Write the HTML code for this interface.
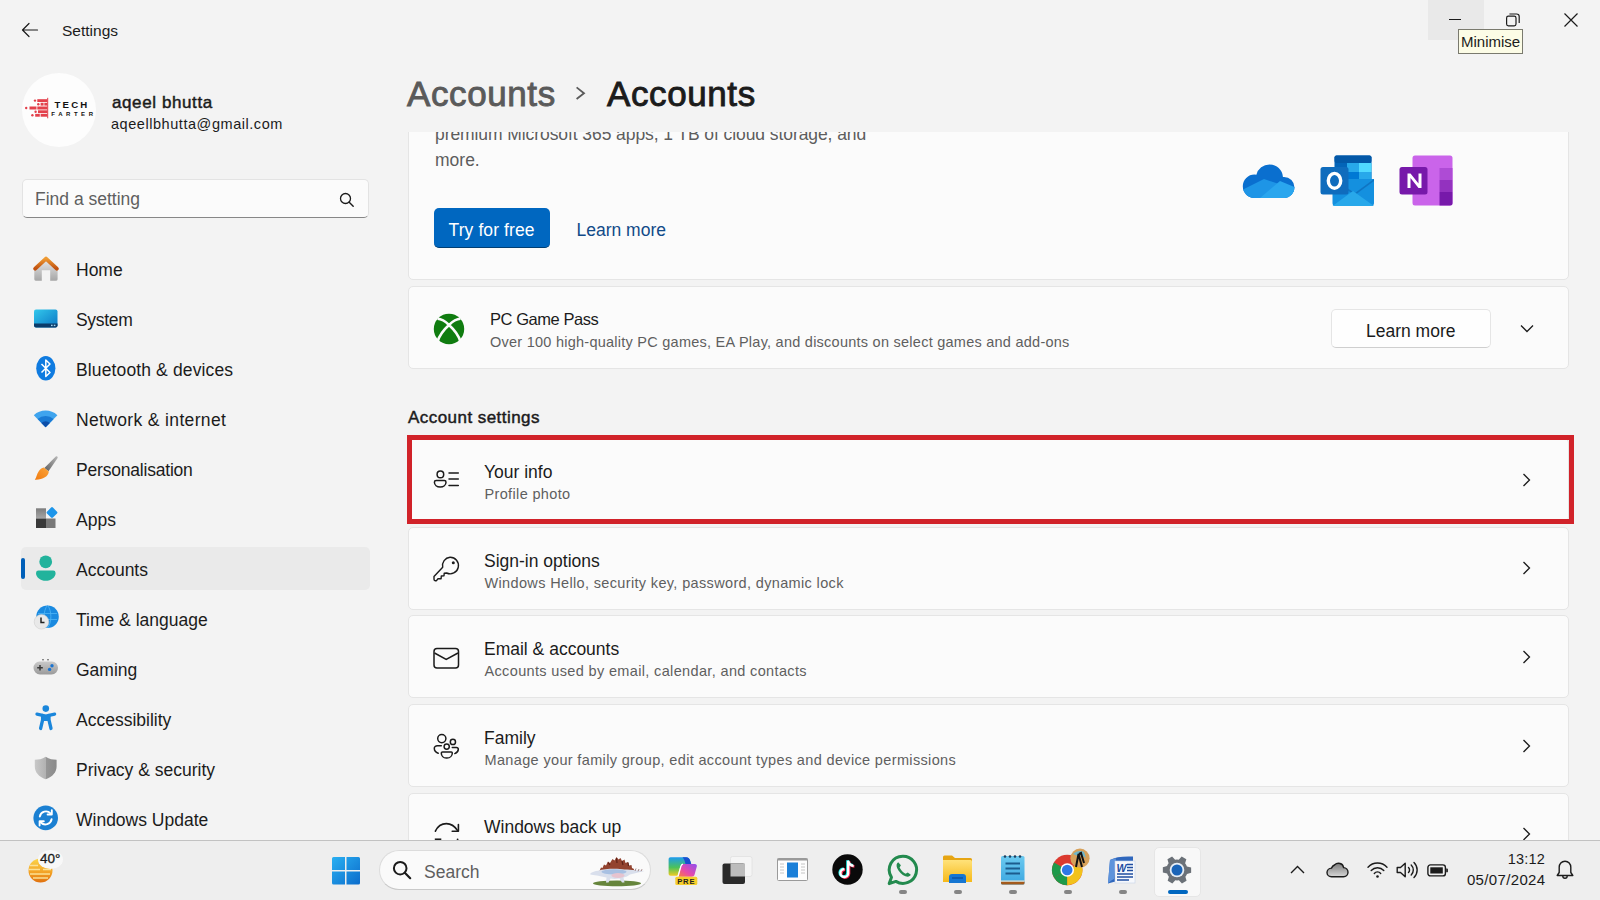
<!DOCTYPE html>
<html><head><meta charset="utf-8">
<style>
*{margin:0;padding:0;box-sizing:border-box}
html,body{width:1600px;height:900px;overflow:hidden;background:#f3f3f3;font-family:"Liberation Sans",sans-serif;color:#1b1b1b}
.a{position:absolute}
.t{position:absolute;white-space:nowrap;line-height:1}
svg{position:absolute;overflow:visible}
.nav .t{font-size:17.5px;left:76px;color:#1b1b1b}
.card{position:absolute;left:408px;width:1161px;background:#fbfbfb;border:1px solid #e5e5e5;border-radius:5px}
.row .ti{position:absolute;left:75px;font-size:17.5px;color:#1b1b1b;line-height:1;white-space:nowrap}
.row .su{position:absolute;left:75.5px;font-size:14.5px;color:#5f5f5f;letter-spacing:0.35px;line-height:1;white-space:nowrap}
.row svg.ch{left:1110px}
.sb{-webkit-text-stroke:0.45px currentColor}
.dot{position:absolute;top:890px;width:8px;height:4px;border-radius:2px;background:#858585}
</style></head><body>

<!-- ===== title bar ===== -->
<svg style="left:20px;top:20px" width="20" height="20" viewBox="0 0 20 20"><path d="M2.5 10H17.5M2.5 10L9 3.5M2.5 10L9 16.5" stroke="#1b1b1b" stroke-width="1.2" fill="none" stroke-linecap="round"/></svg>
<div class="t" style="left:62px;top:23px;font-size:15.5px;letter-spacing:0px">Settings</div>

<div class="a" style="left:1428px;top:0;width:56px;height:40px;background:#e9e9e9"></div>
<div class="a" style="left:1449px;top:19px;width:12px;height:1.2px;background:#1b1b1b"></div>
<svg style="left:1505px;top:12px" width="16" height="16" viewBox="0 0 16 16"><rect x="1.6" y="4.2" width="9.4" height="9.6" rx="1.8" stroke="#1b1b1b" stroke-width="1.2" fill="none"/><path d="M4.4 2H11.6a2.6 2.6 0 0 1 2.6 2.6V11" stroke="#1b1b1b" stroke-width="1.2" fill="none"/></svg>
<svg style="left:1563px;top:12px" width="16" height="16" viewBox="0 0 16 16"><path d="M1.5 1.5L14.5 14.5M14.5 1.5L1.5 14.5" stroke="#1b1b1b" stroke-width="1.2"/></svg>
<div class="a" style="left:1458px;top:29px;width:65px;height:25px;background:#fcfce6;border:1px solid #7a7a6e"></div>
<div class="t" style="left:1461px;top:34px;font-size:15px;color:#1b1b1b">Minimise</div>

<!-- ===== profile ===== -->
<div class="a" style="left:22px;top:73px;width:74px;height:74px;border-radius:50%;background:#fdfdfd"></div>
<svg style="left:22px;top:96px" width="74" height="24" viewBox="0 0 74 24">
 <g fill="#e3404b">
  <circle cx="13" cy="4.6" r="1.2"/><rect x="15.3" y="3.2" width="10.2" height="2.8"/>
  <circle cx="16.3" cy="8.2" r="1.2"/><rect x="18.6" y="6.8" width="3" height="2.8"/><rect x="22.3" y="6.8" width="3.2" height="2.8"/>
  <circle cx="4.2" cy="12" r="1.2"/><rect x="7.5" y="10.5" width="7" height="3"/><rect x="15.3" y="10.5" width="10.2" height="3"/>
  <circle cx="13.6" cy="15.7" r="1.2"/><rect x="16" y="14.3" width="9.5" height="2.8"/>
  <circle cx="10.4" cy="19.3" r="1.2"/><rect x="13.2" y="17.9" width="4.6" height="2.8"/><rect x="18.6" y="17.9" width="6.9" height="2.8"/>
  <rect x="25.2" y="1.8" width="1" height="20.5"/>
 </g>
 <text x="32.5" y="12" textLength="32.7" lengthAdjust="spacing" font-family="Liberation Sans" font-weight="bold" font-size="9.6" fill="#111">TECH</text>
 <text x="29.3" y="19.6" textLength="41.7" lengthAdjust="spacing" font-family="Liberation Sans" font-weight="bold" font-size="6" fill="#111">FARTER</text>
</svg>
<div class="t sb" style="left:112px;top:94px;font-size:17px;letter-spacing:0.6px">aqeel bhutta</div>
<div class="t" style="left:111px;top:117px;font-size:14.5px;letter-spacing:0.55px">aqeellbhutta@gmail.com</div>

<!-- ===== search ===== -->
<div class="a" style="left:22px;top:179px;width:347px;height:39px;background:#fbfbfb;border:1px solid #e3e3e3;border-bottom:1px solid #878787;border-radius:5px"></div>
<div class="t" style="left:35px;top:191px;font-size:17.5px;color:#5f5f5f">Find a setting</div>
<svg style="left:338px;top:191px" width="18" height="18" viewBox="0 0 18 18"><circle cx="7.5" cy="7.5" r="5" stroke="#1b1b1b" stroke-width="1.3" fill="none"/><path d="M11.2 11.2L15.2 15.2" stroke="#1b1b1b" stroke-width="1.4" stroke-linecap="round"/></svg>

<!-- ===== nav ===== -->
<div class="nav">
<div class="a" style="left:21px;top:547px;width:349px;height:43px;background:#eaeaea;border-radius:5px"></div>
<div class="a" style="left:21px;top:558px;width:4px;height:21px;background:#005fb8;border-radius:2px"></div>
<div class="t" style="top:262px">Home</div>
<div class="t" style="top:312px;letter-spacing:-0.3px">System</div>
<div class="t" style="top:362px;letter-spacing:0.13px">Bluetooth &amp; devices</div>
<div class="t" style="top:412px;letter-spacing:0.35px">Network &amp; internet</div>
<div class="t" style="top:462px;letter-spacing:-0.2px">Personalisation</div>
<div class="t" style="top:512px">Apps</div>
<div class="t" style="top:562px">Accounts</div>
<div class="t" style="top:612px">Time &amp; language</div>
<div class="t" style="top:662px">Gaming</div>
<div class="t" style="top:712px">Accessibility</div>
<div class="t" style="top:762px">Privacy &amp; security</div>
<div class="t" style="top:812px">Windows Update</div>
</div>

<!-- nav icons -->
<svg style="left:33px;top:256px" width="26" height="26" viewBox="0 0 26 26">
 <defs><linearGradient id="hw" x1="0" y1="0" x2="0" y2="1"><stop offset="0" stop-color="#e8e8e8"/><stop offset="1" stop-color="#a6a6a6"/></linearGradient>
 <linearGradient id="hr" x1="0" y1="0" x2="0" y2="1"><stop offset="0" stop-color="#ee9a32"/><stop offset="1" stop-color="#c0500f"/></linearGradient></defs>
 <path d="M1.3 13V23.3a1.4 1.4 0 0 0 1.4 1.4H8.8V14.2H17.2V24.7H23.2a1.4 1.4 0 0 0 1.4-1.4V13L13 3.5Z" fill="url(#hw)"/>
 <path d="M2.2 12.6L13 2.6L23.8 12.6" stroke="url(#hr)" stroke-width="4" fill="none" stroke-linecap="round" stroke-linejoin="round"/>
</svg>
<svg style="left:34px;top:309px" width="24" height="19" viewBox="0 0 24 19">
 <defs><linearGradient id="sy" x1="0" y1="0" x2="1" y2="1"><stop offset="0" stop-color="#33c8ec"/><stop offset="1" stop-color="#0a76c4"/></linearGradient></defs>
 <rect x="0" y="0.5" width="23.5" height="18" rx="2" fill="url(#sy)"/>
 <path d="M0 14.5H23.5V16.5a2 2 0 0 1-2 2H2a2 2 0 0 1-2-2Z" fill="#0b3c6a"/>
 <rect x="17" y="15.7" width="1.6" height="1.4" fill="#9fd4f0"/><rect x="19.8" y="15.7" width="1.6" height="1.4" fill="#9fd4f0"/>
</svg>
<svg style="left:36px;top:356px" width="20" height="25" viewBox="0 0 20 25">
 <ellipse cx="9.8" cy="12.3" rx="9.6" ry="12.2" fill="#0f7be0"/>
 <path d="M5.5 8L14 16.5L9.8 20.5V4L14 8L5.5 16.5" stroke="#fff" stroke-width="1.5" fill="none" stroke-linejoin="round"/>
</svg>
<svg style="left:33px;top:409px" width="26" height="19" viewBox="0 0 26 19">
 <path d="M0.8 6.2A17.5 17.5 0 0 1 24.4 6.2L12.6 18.2Z" fill="#3fa4ee"/>
 <path d="M4.6 10A12 12 0 0 1 20.6 10L12.6 18.2Z" fill="#1a7ad4"/>
 <path d="M8.4 13.9A6.4 6.4 0 0 1 16.8 13.9L12.6 18.2Z" fill="#0c4ea8"/>
</svg>
<svg style="left:34px;top:455px" width="25" height="26" viewBox="0 0 25 26">
 <defs><linearGradient id="bh" x1="0" y1="1" x2="1" y2="0"><stop offset="0" stop-color="#5e5e5e"/><stop offset="1" stop-color="#b8b8b8"/></linearGradient>
 <linearGradient id="bb" x1="0" y1="1" x2="1" y2="0"><stop offset="0" stop-color="#f07a10"/><stop offset="1" stop-color="#fca53a"/></linearGradient></defs>
 <path d="M21.8 1.6C22.8 0.8 24.2 1.8 23.6 3L14.5 16.2L10.4 13Z" fill="url(#bh)"/>
 <path d="M9.8 12.6L14.8 16.6C14.5 21.5 8.5 25.2 0.8 24.8C2.5 22.8 2.8 19 4.6 16.6C6 14.4 7.8 13 9.8 12.6Z" fill="url(#bb)"/>
</svg>
<svg style="left:35px;top:506px" width="24" height="24" viewBox="0 0 24 24">
 <defs><linearGradient id="ap1" x1="0" y1="0" x2="0" y2="1"><stop offset="0" stop-color="#7c7c7c"/><stop offset="1" stop-color="#a6a6a6"/></linearGradient></defs>
 <rect x="1" y="2.3" width="10" height="10.2" fill="url(#ap1)"/>
 <rect x="1" y="12.5" width="10" height="9.5" fill="#393939"/>
 <rect x="11" y="12.5" width="9.5" height="9.5" fill="#787878"/>
 <rect x="12.8" y="2.4" width="8.4" height="8.4" rx="1.3" fill="#1c95ea" transform="rotate(45 17 6.6)"/>
</svg>
<svg style="left:35px;top:554px" width="22" height="28" viewBox="0 0 22 28">
 <circle cx="10.7" cy="7.8" r="6.4" fill="#22b39c"/>
 <path d="M1 19A2.5 2.5 0 0 1 3.5 16.6H18A2.5 2.5 0 0 1 20.6 19C20.6 23.5 16 26.8 10.8 26.8C5.6 26.8 1 23.5 1 19Z" fill="#22b39c"/>
</svg>
<svg style="left:34px;top:605px" width="26" height="25" viewBox="0 0 26 25">
 <circle cx="13.5" cy="11.7" r="11.3" fill="#1a8ae0"/>
 <path d="M4 8.5H23M4.5 14.5H23M13.5 0.5C9 5 9 18 13.5 23M13.5 0.5C18 5 18 18 13.5 23" stroke="#4fb5f5" stroke-width="0.8" fill="none"/>
 <circle cx="7.5" cy="16.8" r="7.3" fill="#e9e9e9"/><circle cx="7.5" cy="16.8" r="7.3" fill="none" stroke="#cfcfcf" stroke-width="0.6"/>
 <path d="M7 12.5V17.5H10.5" stroke="#222" stroke-width="1.5" fill="none"/>
</svg>
<svg style="left:33px;top:659px" width="26" height="17" viewBox="0 0 26 17">
 <defs><linearGradient id="gm" x1="0" y1="0" x2="0" y2="1"><stop offset="0" stop-color="#c9c9c9"/><stop offset="1" stop-color="#9a9a9a"/></linearGradient></defs>
 <path d="M6.5 2.5H19A6.2 6.2 0 0 1 25 8.7A6.5 6.5 0 0 1 18.5 15.5H7A6.5 6.5 0 0 1 0.5 9A6.5 6.5 0 0 1 6.5 2.5Z" fill="url(#gm)"/>
 <path d="M4.2 8.7H9.8M7 5.9V11.5" stroke="#3a3a3a" stroke-width="1.5"/>
 <circle cx="19" cy="6.7" r="1.7" fill="#1b74d0"/><circle cx="16.6" cy="10.4" r="1.7" fill="#1b74d0"/>
 <rect x="9" y="0" width="2" height="1.4" fill="#888"/><rect x="14" y="0" width="2" height="1.4" fill="#888"/>
</svg>
<svg style="left:35px;top:705px" width="22" height="26" viewBox="0 0 22 26">
 <circle cx="10.8" cy="3.6" r="3.3" fill="#1a86db"/>
 <path d="M2 9.2L10.8 11L19.6 9.2" stroke="#1a86db" stroke-width="3.3" stroke-linecap="round" fill="none"/>
 <path d="M7.6 10.5V15L5.6 23.5M14 10.5V15L16 23.5" stroke="#1a86db" stroke-width="3.3" stroke-linecap="round" fill="none"/>
 <rect x="7.6" y="10" width="6.4" height="6" fill="#1a86db"/>
</svg>
<svg style="left:34px;top:756px" width="24" height="24" viewBox="0 0 24 24">
 <defs><linearGradient id="sh" x1="0" y1="0" x2="1" y2="0"><stop offset="0" stop-color="#c8c8c8"/><stop offset="0.5" stop-color="#b2b2b2"/><stop offset="0.5" stop-color="#979797"/><stop offset="1" stop-color="#8a8a8a"/></linearGradient></defs>
 <path d="M11.7 0.8C8 3.2 4.5 3.8 0.8 3.8V10.5C0.8 16.3 4.8 20.8 11.7 23.2C18.6 20.8 22.6 16.3 22.6 10.5V3.8C18.9 3.8 15.4 3.2 11.7 0.8Z" fill="url(#sh)"/>
</svg>
<svg style="left:33px;top:805px" width="26" height="26" viewBox="0 0 26 26">
 <circle cx="12.7" cy="12.9" r="12.3" fill="#1b80d2"/>
 <path d="M6.8 11.5A6.3 6.3 0 0 1 17.5 8.3" stroke="#fff" stroke-width="1.9" fill="none" stroke-linecap="round"/>
 <path d="M18.8 5.3V9.5H14.6" stroke="#fff" stroke-width="1.9" fill="none" stroke-linecap="round" stroke-linejoin="round"/>
 <path d="M18.6 14.3A6.3 6.3 0 0 1 7.9 17.5" stroke="#fff" stroke-width="1.9" fill="none" stroke-linecap="round"/>
 <path d="M6.6 20.5V16.3H10.8" stroke="#fff" stroke-width="1.9" fill="none" stroke-linecap="round" stroke-linejoin="round"/>
</svg>

<!-- ===== header ===== -->
<div class="t" style="left:407px;top:76px;font-size:35px;color:#5a5a5a;letter-spacing:0.6px;-webkit-text-stroke:0.9px #5a5a5a">Accounts</div>
<svg style="left:573px;top:85px" width="16" height="16" viewBox="0 0 16 16"><path d="M3.6 2.4L11 8.2L3.6 14" stroke="#5a5a5a" stroke-width="1.8" fill="none"/></svg>
<div class="t" style="left:607px;top:76px;font-size:35px;color:#1b1b1b;letter-spacing:0.6px;-webkit-text-stroke:0.9px #1b1b1b">Accounts</div>

<!-- ===== content ===== -->
<div class="a" style="left:0;top:131.5px;width:1600px;height:708.5px;overflow:hidden">
 <div class="a" style="left:0;top:-131.5px;width:1600px;height:900px">
  <div class="card" style="top:60px;height:220px">
   <div class="t" style="left:26px;top:64.5px;font-size:17.5px;color:#5d5d5d;letter-spacing:-0.08px">premium Microsoft 365 apps, 1 TB of cloud storage, and</div>
   <div class="t" style="left:26px;top:90.5px;font-size:17.5px;color:#5d5d5d">more.</div>
   <div class="a" style="left:25px;top:147px;width:116px;height:40px;background:#0067c0;border-radius:5px;border-bottom:1px solid #003e73"></div>
   <div class="t" style="left:39.5px;top:161px;font-size:17.5px;color:#fff;letter-spacing:0.1px">Try for free</div>
   <div class="t" style="left:167.5px;top:161px;font-size:17.5px;color:#114a88">Learn more</div>
  </div>
  <!-- M365 icons -->
  <svg style="left:1242px;top:164px" width="55" height="36" viewBox="0 0 55 36">
   <defs><clipPath id="cl"><circle cx="27.5" cy="14" r="13.5"/><circle cx="12.5" cy="22.3" r="11.7"/><circle cx="42" cy="23.5" r="10.5"/><rect x="12" y="20" width="31" height="14"/></clipPath></defs>
   <g clip-path="url(#cl)">
    <rect x="0" y="0" width="55" height="36" fill="#0a6fcf"/>
    <path d="M0 26L22 15L55 26V36H0Z" fill="#1e95e6"/>
    <path d="M18 34L38 17L55 24V36Z" fill="#2aa6ee"/>
   </g>
  </svg>
  <svg style="left:1320px;top:155px" width="56" height="52" viewBox="0 0 56 52">
   <rect x="14.5" y="0.5" width="37" height="32" rx="2" fill="#0364b8"/>
   <rect x="27" y="8" width="12" height="9" fill="#28a8ea"/><rect x="39" y="8" width="12.5" height="9" fill="#50d9ff"/>
   <rect x="27" y="17" width="12" height="9" fill="#0078d4"/><rect x="39" y="17" width="12.5" height="9" fill="#28a8ea"/>
   <rect x="14.5" y="0.5" width="37" height="7.5" rx="2" fill="#0358a7"/>
   <path d="M12.5 24L54 24V48A3 3 0 0 1 51 51H15.5A3 3 0 0 1 12.5 48Z" fill="#1490df"/>
   <path d="M12.5 24L35 38L54 24V26L35 40L12.5 26Z" fill="#0a5aa8" opacity="0.5"/>
   <path d="M12.5 51L33 36L54 51Z" fill="#28a8ea"/>
   <rect x="0.5" y="12" width="28" height="27.5" rx="2.5" fill="#0f6cbd"/>
   <ellipse cx="14.5" cy="25.8" rx="6.2" ry="7.4" stroke="#fff" stroke-width="3.4" fill="none"/>
  </svg>
  <svg style="left:1399px;top:155px" width="56" height="52" viewBox="0 0 56 52">
   <rect x="13.5" y="0.5" width="40" height="50" rx="2.5" fill="#ca64ea"/>
   <rect x="40.5" y="13" width="13" height="12" fill="#ae4bd5"/>
   <rect x="40.5" y="25" width="13" height="12" fill="#9332bf"/>
   <path d="M40.5 37H53.5V48A2.5 2.5 0 0 1 51 50.5H40.5Z" fill="#7719aa"/>
   <rect x="0.5" y="12" width="28" height="27.5" rx="2.5" fill="#7719aa"/>
   <path d="M8.5 33V18.5H11.5L19.5 28.5V18.5H22.5V33H19.5L11.5 23V33Z" fill="#fff"/>
  </svg>

  <!-- PC game pass -->
  <div class="card" style="top:285.5px;height:83px">
   <div class="t" style="left:81px;top:24.5px;font-size:16.5px;letter-spacing:-0.45px">PC Game Pass</div>
   <div class="t" style="left:81px;top:48px;font-size:14.5px;color:#5f5f5f;letter-spacing:0.25px">Over 100 high-quality PC games, EA Play, and discounts on select games and add-ons</div>
   <div class="a" style="left:922px;top:22px;width:160px;height:39px;background:#fefefe;border:1px solid #e5e5e5;border-bottom-color:#cfcfcf;border-radius:5px"></div>
   <div class="t" style="left:957px;top:36px;font-size:17.5px">Learn more</div>
   <svg style="left:1110px;top:34px" width="16" height="16" viewBox="0 0 16 16"><path d="M2 4.5L8 10.5L14 4.5" stroke="#1b1b1b" stroke-width="1.3" fill="none"/></svg>
  </div>
  <svg style="left:433px;top:313px" width="32" height="32" viewBox="0 0 32 32">
   <circle cx="16" cy="16" r="15.2" fill="#107c10"/>
   <path d="M4.5 5.8C9.5 6 13.5 9.5 16 12C18.5 9.5 22.5 6 27.5 5.8M16 12C11 16.5 6.5 22.5 4.5 28.5M16 12C21 16.5 25.5 22.5 27.5 28.5" stroke="#fbfbfb" stroke-width="2.6" fill="none"/>
  </svg>

  <div class="t sb" style="left:408px;top:409px;font-size:17px;letter-spacing:0.45px">Account settings</div>

  <div class="card row" style="top:438px;height:84px"><div class="ti" style="top:25px">Your info</div><div class="su" style="top:48px">Profile photo</div>
   <svg class="ch" style="top:32.5px" width="16" height="16" viewBox="0 0 16 16"><path d="M4.5 2L10.5 8L4.5 14" stroke="#1b1b1b" stroke-width="1.3" fill="none"/></svg></div>
  <div class="card row" style="top:527px;height:83px"><div class="ti" style="top:25px">Sign-in options</div><div class="su" style="top:48px">Windows Hello, security key, password, dynamic lock</div>
   <svg class="ch" style="top:32px" width="16" height="16" viewBox="0 0 16 16"><path d="M4.5 2L10.5 8L4.5 14" stroke="#1b1b1b" stroke-width="1.3" fill="none"/></svg></div>
  <div class="card row" style="top:615px;height:83px"><div class="ti" style="top:25px">Email &amp; accounts</div><div class="su" style="top:48px">Accounts used by email, calendar, and contacts</div>
   <svg class="ch" style="top:32.5px" width="16" height="16" viewBox="0 0 16 16"><path d="M4.5 2L10.5 8L4.5 14" stroke="#1b1b1b" stroke-width="1.3" fill="none"/></svg></div>
  <div class="card row" style="top:704px;height:83px"><div class="ti" style="top:25px">Family</div><div class="su" style="top:48px">Manage your family group, edit account types and device permissions</div>
   <svg class="ch" style="top:32.5px" width="16" height="16" viewBox="0 0 16 16"><path d="M4.5 2L10.5 8L4.5 14" stroke="#1b1b1b" stroke-width="1.3" fill="none"/></svg></div>
  <div class="card row" style="top:793px;height:84px"><div class="ti" style="top:25px">Windows back up</div>
   <svg class="ch" style="top:32px" width="16" height="16" viewBox="0 0 16 16"><path d="M4.5 2L10.5 8L4.5 14" stroke="#1b1b1b" stroke-width="1.3" fill="none"/></svg></div>

  <!-- row icons -->
  <svg style="left:433px;top:469px" width="27" height="20" viewBox="0 0 27 20">
   <g stroke="#1b1b1b" stroke-width="1.5" fill="none" stroke-linecap="round">
   <circle cx="7.4" cy="5.4" r="3.3"/>
   <path d="M3.2 11.6H11.4C12.4 11.6 13 12.2 13 13.2C13 15.9 10.5 17.9 7.2 17.9C3.9 17.9 1.4 15.9 1.4 13.2C1.4 12.2 2.2 11.6 3.2 11.6Z"/>
   <path d="M16 3.9H25.3M16 10.1H25.3M16 16.5H25.3"/>
   </g>
  </svg>
  <svg style="left:433px;top:556px" width="27" height="27" viewBox="0 0 27 27">
   <path d="M17 1.2A8.3 8.3 0 1 1 13.6 17L11.2 17.2L11 19.8L8.3 20L8.1 22.7L5 22.8L3.7 24.4C2.6 25.3 1 24.6 1 23.2V20.5L9.7 11.2A8.3 8.3 0 0 1 17 1.2Z" stroke="#1b1b1b" stroke-width="1.4" fill="none" stroke-linejoin="round"/>
   <circle cx="20.3" cy="6.8" r="1.5" fill="#1b1b1b"/>
  </svg>
  <svg style="left:433px;top:647px" width="27" height="23" viewBox="0 0 27 23">
   <rect x="1" y="1.5" width="24.5" height="19.5" rx="3" stroke="#1b1b1b" stroke-width="1.5" fill="none"/>
   <path d="M1.5 6L13.2 12.5L25 6" stroke="#1b1b1b" stroke-width="1.5" fill="none"/>
  </svg>
  <svg style="left:433px;top:733px" width="27" height="27" viewBox="0 0 27 27">
   <g stroke="#1b1b1b" stroke-width="1.5" fill="none" stroke-linecap="round">
   <circle cx="8.8" cy="5.6" r="4.1"/>
   <circle cx="19.9" cy="8.9" r="2.6"/>
   <circle cx="13.7" cy="13.6" r="2.6"/>
   <path d="M8.3 12.8H4.3C2.6 12.8 1.3 13.8 1.3 15.3C1.3 17.6 2.8 19.4 5.2 20.2"/>
   <path d="M19.3 14.5H23.3C24.5 14.5 25.3 15.2 25.3 16.3C25.3 18.3 24 19.8 21.8 20.6"/>
   <path d="M9.5 18.9H18.3C18.9 18.9 19.3 19.3 19.3 19.9C19.3 22.8 17 25.1 14 25.1H13.3C10.3 25.1 8.3 22.8 8.3 19.9C8.3 19.3 8.8 18.9 9.5 18.9Z"/>
   </g>
  </svg>
  <svg style="left:433px;top:821px" width="27" height="27" viewBox="0 0 27 27">
   <path d="M2.4 10.2C4.5 5.5 8.5 2.6 13.4 2.6C17.6 2.6 21.5 4.8 24.6 9.6" stroke="#1b1b1b" stroke-width="1.6" fill="none" stroke-linecap="round"/>
   <path d="M25.4 3.6V10.2H19.2" stroke="#1b1b1b" stroke-width="1.6" fill="none" stroke-linecap="round" stroke-linejoin="round"/>
   <path d="M1.8 18.3H8.3" stroke="#1b1b1b" stroke-width="1.7"/>
   <circle cx="24.6" cy="18.3" r="0.9" fill="#1b1b1b"/>
  </svg>

  <div class="a" style="left:407px;top:435px;width:1167px;height:89px;border:5px solid #d12229"></div>
 </div>
</div>

<!-- ===== taskbar ===== -->
<div class="a" style="left:0;top:840px;width:1600px;height:60px;background:#eeeeee;border-top:1.6px solid #c2c2c2"></div>

<!-- weather -->
<svg style="left:26px;top:848px" width="40" height="38" viewBox="0 0 40 38">
 <defs><linearGradient id="wx" x1="0" y1="0" x2="0" y2="1"><stop offset="0" stop-color="#fbd54a"/><stop offset="0.6" stop-color="#f2a024"/><stop offset="1" stop-color="#e0700e"/></linearGradient></defs>
 <circle cx="14.5" cy="22.5" r="12" fill="url(#wx)"/>
 <path d="M4 17.5H12M3 21.5H14M17 21.5H25M4 26H24M7 30H22" stroke="#fde7a0" stroke-width="1.5" opacity="0.9"/>
 <ellipse cx="24.5" cy="11.5" rx="12.5" ry="9.5" fill="#f8f8f8"/>
</svg>
<div class="t" style="left:40px;top:852px;font-size:13.5px;color:#1b1b1b;-webkit-text-stroke:0.3px #1b1b1b">40°</div>

<!-- start -->
<svg style="left:331px;top:856px" width="30" height="30" viewBox="0 0 30 30">
 <defs><linearGradient id="wl" x1="0" y1="0" x2="1" y2="1"><stop offset="0" stop-color="#2ab0f2"/><stop offset="1" stop-color="#0c6ccb"/></linearGradient></defs>
 <path d="M1 2.5A1.5 1.5 0 0 1 2.5 1H14V14H1ZM15.5 1H27.5A1.5 1.5 0 0 1 29 2.5V14H15.5ZM1 15.5H14V28.5H2.5A1.5 1.5 0 0 1 1 27ZM15.5 15.5H29V27A1.5 1.5 0 0 1 27.5 28.5H15.5Z" fill="url(#wl)"/>
</svg>

<!-- search pill -->
<div class="a" style="left:379px;top:850px;width:272px;height:40px;border-radius:20px;background:#fafafa;border:1px solid #dcdcdc;border-bottom-color:#c9c9c9"></div>
<svg style="left:392px;top:860px" width="20" height="20" viewBox="0 0 20 20"><circle cx="8.2" cy="8.2" r="6.3" stroke="#1b1b1b" stroke-width="2" fill="none"/><path d="M12.8 12.8L18.2 18.2" stroke="#1b1b1b" stroke-width="2.2" stroke-linecap="round"/></svg>
<div class="t" style="left:424px;top:863.5px;font-size:17.5px;color:#5f5f5f">Search</div>
<svg style="left:588px;top:855px" width="58" height="32" viewBox="0 0 58 32">
 <ellipse cx="29" cy="28.4" rx="24" ry="2.9" fill="#66853c"/>
 <path d="M11.5 16L13 12.5L14.5 13L16 9.5L18 10.5L20 6.5L22 8L24.5 4L26.5 5.5L28.5 2L30.5 4.5L32.5 3L34 6L36.5 4.5L37.5 8L40 7L41 10.5L43.5 10L44 13L46 14L45.5 17H12Z" fill="#93432f"/>
 <path d="M20 7.5L22 10M28.5 3L29 8M34 6L35 10M40 7.5L40.5 11" stroke="#5e2218" stroke-width="1.2"/>
 <path d="M2.3 18.6C4 17 7 16 10 15.8C16 14 24 13.5 32 14C38 14.5 44 15 56.6 15.9C50 17.5 46 18.5 42 19.5C40 21 38 22 35.5 22.5L36.5 27.5H34L31.5 23.5C28 24 25 24 22.5 23.5L20.5 27.5H18L18.5 22.5C15 22 12 21 9 20.5C6 20.3 4 20 2.3 19.6Z" fill="#d9dfec"/>
 <ellipse cx="26" cy="16.8" rx="12.5" ry="2.6" fill="#a8c0e2"/>
 <ellipse cx="30" cy="20.5" rx="6.5" ry="2.5" fill="#e6c3cf"/>
 <path d="M47 16L48 13.5M50 16.3L51 14M53 16.2L54 14.2" stroke="#8e6a6a" stroke-width="0.8"/>
</svg>

<!-- copilot -->
<svg style="left:667px;top:856px" width="32" height="30" viewBox="0 0 32 30">
 <defs>
  <linearGradient id="cp1" x1="0" y1="0" x2="0" y2="1"><stop offset="0" stop-color="#1d9bf0"/><stop offset="0.55" stop-color="#4cc25a"/><stop offset="1" stop-color="#f2cc22"/></linearGradient>
  <linearGradient id="cp2" x1="1" y1="0" x2="0" y2="1"><stop offset="0" stop-color="#8e4ef0"/><stop offset="0.6" stop-color="#e94aa8"/><stop offset="1" stop-color="#f8803a"/></linearGradient>
 </defs>
 <path d="M3.5 1.2H19C21.5 1.2 22.6 2.8 23.4 5.2L24.2 8H16.2C14.6 8 13.9 9 13.5 10.3L10.6 19.8H3.6C2.5 19.8 1.6 19 1.6 17.8V3.2C1.6 2 2.4 1.2 3.5 1.2Z" fill="url(#cp1)"/>
 <path d="M15.5 1.2H19C21.5 1.2 22.6 2.8 23.4 5.2L24.2 8H18.5C17.8 5 17 2.5 15.5 1.2Z" fill="#1b4fcf"/>
 <path d="M16.2 8H27.8C29.3 8 30.2 9.2 29.8 10.6L27.6 18.6C27.2 20 26.2 20.8 24.6 20.8H11.3L13.9 10.4C14.3 9 15 8 16.2 8Z" fill="url(#cp2)"/>
 <path d="M16 8.2C14.8 8.4 14.2 9.4 13.8 10.6L11 20.5" stroke="#fff" stroke-width="1.3" fill="none"/>
 <rect x="8.3" y="20.7" width="22" height="8.2" rx="1.5" fill="#f6cf2b"/>
 <text x="19.3" y="27.7" text-anchor="middle" font-family="Liberation Sans" font-weight="bold" font-size="7.6" fill="#1e1e1e" letter-spacing="0.9">PRE</text>
</svg>

<!-- task view -->
<svg style="left:722px;top:856px" width="31" height="29" viewBox="0 0 31 29">
 <rect x="8.5" y="0.5" width="21.5" height="20" rx="2" fill="#f5f5f5" stroke="#e0e0e0" stroke-width="0.8"/>
 <rect x="0.5" y="7.5" width="22.5" height="20.5" rx="2" fill="#2a2a2a"/>
 <rect x="8.5" y="7.5" width="14.5" height="13" fill="#bcbcbc"/>
</svg>

<!-- widgets board -->
<svg style="left:777px;top:858px" width="32" height="24" viewBox="0 0 32 24">
 <rect x="0.5" y="0.5" width="30" height="22" rx="1" fill="#fdfdfd" stroke="#9a9a9a" stroke-width="1"/>
 <rect x="0.5" y="0.5" width="30" height="2" fill="#9a9a9a"/>
 <rect x="10" y="4.5" width="11" height="15" fill="#1a7fd8"/>
 <path d="M3 6H7M3 9H7M3 12H7M3 15H7M24 6H28M24 9H28M24 12H28M24 15H28" stroke="#c6c6c6" stroke-width="1"/>
</svg>

<!-- tiktok -->
<svg style="left:832px;top:854px" width="31" height="31" viewBox="0 0 31 31">
 <circle cx="15.5" cy="15.5" r="15.2" fill="#0a0a0a"/>
 <g fill="none" stroke-width="2.6">
 <path d="M16.2 6.8V19.2A3.9 3.9 0 1 1 12.4 15.2M16.2 6.8C16.7 9.6 18.8 11.6 21.6 11.8" stroke="#ff2d55" transform="translate(0.8 0.6)"/>
 <path d="M16.2 6.8V19.2A3.9 3.9 0 1 1 12.4 15.2M16.2 6.8C16.7 9.6 18.8 11.6 21.6 11.8" stroke="#25f4ee" transform="translate(-0.7 -0.5)"/>
 <path d="M16.2 6.8V19.2A3.9 3.9 0 1 1 12.4 15.2M16.2 6.8C16.7 9.6 18.8 11.6 21.6 11.8" stroke="#fff" stroke-width="2.3"/>
 </g>
</svg>

<!-- whatsapp -->
<svg style="left:887px;top:854px" width="32" height="32" viewBox="0 0 32 32">
 <path d="M16 2.2A13.6 13.6 0 1 1 8.9 27.4L2.2 29.6L4.5 23.3A13.6 13.6 0 0 1 16 2.2Z" stroke="#238a4e" stroke-width="3" fill="none" stroke-linejoin="round"/>
 <path d="M11.2 8.2C9.6 9.2 9 11.5 10.2 14.2C11.8 17.8 14.8 20.8 18.4 22.2C21 23.2 23 22.5 23.8 20.8L20.8 18.5L18.6 19.8C16.4 18.8 13.6 16 12.6 13.6L13.9 11.3Z" fill="#238a4e"/>
</svg>
<div class="dot" style="left:899px"></div>

<!-- file explorer -->
<svg style="left:942px;top:855px" width="31" height="29" viewBox="0 0 31 29">
 <defs><linearGradient id="fe" x1="0" y1="0" x2="0" y2="1"><stop offset="0" stop-color="#ffe27a"/><stop offset="1" stop-color="#f6b919"/></linearGradient></defs>
 <path d="M1 2A1.5 1.5 0 0 1 2.5 0.5H10L13 3H28.5A1.5 1.5 0 0 1 30 4.5V8H1Z" fill="#e6a513"/>
 <path d="M1 5H28.5A1.5 1.5 0 0 1 30 6.5V27H1Z" fill="url(#fe)"/>
 <path d="M7 28V22A3 3 0 0 1 10 19H21A3 3 0 0 1 24 22V28Z" fill="#1676d2"/>
 <path d="M10 23H21" stroke="#0d4c98" stroke-width="1.2"/>
</svg>
<div class="dot" style="left:954px"></div>

<!-- notepad -->
<svg style="left:1000px;top:854px" width="26" height="32" viewBox="0 0 26 32">
 <defs><linearGradient id="np" x1="0" y1="0" x2="0" y2="1"><stop offset="0" stop-color="#6ccaf0"/><stop offset="1" stop-color="#3aa6e0"/></linearGradient></defs>
 <rect x="1" y="2" width="23.5" height="28.5" rx="1.5" fill="url(#np)"/>
 <path d="M1 27.5H24.5V29A1.5 1.5 0 0 1 23 30.5H2.5A1.5 1.5 0 0 1 1 29Z" fill="#a45a1c"/>
 <rect x="1" y="26.5" width="23.5" height="1.2" fill="#f2e7d5"/>
 <g fill="#1f3f5e"><circle cx="5" cy="2.5" r="1.3"/><circle cx="10" cy="2.5" r="1.3"/><circle cx="15" cy="2.5" r="1.3"/><circle cx="20" cy="2.5" r="1.3"/></g>
 <path d="M5.5 9.5H20M5.5 14.5H20M5.5 19.5H20" stroke="#1c5c8e" stroke-width="1.8"/>
</svg>
<div class="dot" style="left:1009px"></div>

<!-- chrome -->
<svg style="left:1051px;top:848px" width="40" height="38" viewBox="0 0 40 38">
 <circle cx="16.2" cy="22" r="15.2" fill="#db3a2f"/>
 <path d="M16.2 22L3 29.6A15.2 15.2 0 0 0 16.2 37.2Z" fill="#1e9a4a"/>
 <path d="M16.2 22L3 29.6A15.2 15.2 0 0 1 3 14.4Z" fill="#1e9a4a"/>
 <path d="M16.2 22L29.4 14.4A15.2 15.2 0 0 1 16.2 37.2Z" fill="#f2c21b"/>
 <circle cx="16.2" cy="22" r="6.8" fill="#fff"/>
 <circle cx="16.2" cy="22" r="5.3" fill="#2f78e6"/>
 <circle cx="29" cy="10.2" r="9.6" fill="#d7a15a"/>
 <path d="M22 6C25 3 30 2 33 4L35 10C33 8 30 7 27 8Z" fill="#6fb6c8"/>
 <path d="M25 19L27.5 6L31 19M28 6L30 5L33 15" stroke="#111" stroke-width="2" fill="none"/>
</svg>
<div class="dot" style="left:1064px"></div>

<!-- word -->
<svg style="left:1107px;top:855px" width="30" height="30" viewBox="0 0 30 30">
 <path d="M3 5C8 2 16 1 26 1.5V25C16 25 8 26 1 28.5Z" fill="#2f67bd"/>
 <path d="M3 5C6 4 8 3.5 9 3.5L7 24C5 25 3 26 1 28.5Z" fill="#5d93dc"/>
 <rect x="8" y="6" width="20" height="22" fill="#f6f8fc" stroke="#c6d2e6" stroke-width="0.6"/>
 <text x="9.5" y="16.5" font-family="Liberation Sans" font-weight="bold" font-style="italic" font-size="10.5" fill="#1f4da0">W</text>
 <path d="M20 9.5H26M20 12.5H26M20 15.5H26M10 19H26M10 22H26M10 25H22" stroke="#1f4da0" stroke-width="1.6"/>
</svg>
<div class="dot" style="left:1119px"></div>

<!-- settings (active) -->
<div class="a" style="left:1154px;top:847px;width:47px;height:50px;background:#f8f8f8;border:1px solid #e6e6e6;border-radius:5px"></div>
<svg style="left:1161px;top:855px" width="32" height="30" viewBox="0 0 32 30">
 <path transform="rotate(30 16 15)" d="M13.3 1H18.7L19.7 5.2A10.8 10.8 0 0 1 22.8 7L27 5.8L29.7 10.4L26.6 13.4A10.8 10.8 0 0 1 26.6 16.6L29.7 19.6L27 24.2L22.8 23A10.8 10.8 0 0 1 19.7 24.8L18.7 29H13.3L12.3 24.8A10.8 10.8 0 0 1 9.2 23L5 24.2L2.3 19.6L5.4 16.6A10.8 10.8 0 0 1 5.4 13.4L2.3 10.4L5 5.8L9.2 7A10.8 10.8 0 0 1 12.3 5.2Z" fill="#6b7178"/>
 <circle cx="16" cy="15" r="7.3" fill="#e7eef6"/>
 <circle cx="16" cy="15" r="5.5" fill="#1a64b8"/>
</svg>
<div class="a" style="left:1168px;top:890px;width:20px;height:4px;border-radius:2px;background:#0067c0"></div>

<!-- tray -->
<svg style="left:1289px;top:864px" width="17" height="11" viewBox="0 0 17 11"><path d="M2 9L8.5 2.5L15 9" stroke="#1b1b1b" stroke-width="1.4" fill="none"/></svg>
<svg style="left:1326px;top:862px" width="23" height="16" viewBox="0 0 23 16">
 <defs><linearGradient id="od" x1="0" y1="0" x2="0" y2="1"><stop offset="0" stop-color="#7a7a7a"/><stop offset="1" stop-color="#d8d8d8"/></linearGradient></defs>
 <path d="M8.5 3C10 1.5 12 1 14 1.5C16 2 17.3 3.6 17.6 5.6C20 5.8 22 7.8 22 10.3C22 13 20 14.8 17.5 14.8H5.5C3 14.8 1 13 1 10.5C1 8 3 6.2 5.5 6.1C6.2 4.6 7.2 3.6 8.5 3Z" fill="url(#od)" stroke="#1b1b1b" stroke-width="1.4"/>
</svg>
<svg style="left:1367px;top:862px" width="21" height="16" viewBox="0 0 21 16">
 <path d="M1 5.2A13 13 0 0 1 20 5.2M4.2 8.5A8.5 8.5 0 0 1 16.8 8.5M7.3 11.5A4 4 0 0 1 13.7 11.5" stroke="#1b1b1b" stroke-width="1.4" fill="none" stroke-linecap="round"/>
 <circle cx="10.5" cy="14.5" r="1.3" fill="#1b1b1b"/>
</svg>
<svg style="left:1396px;top:861px" width="22" height="18" viewBox="0 0 22 18">
 <path d="M1.2 6.5H4.5L9.2 2.2V15.8L4.5 11.5H1.2Z" stroke="#1b1b1b" stroke-width="1.4" fill="none" stroke-linejoin="round"/>
 <path d="M12.5 6.5A3.5 3.5 0 0 1 12.5 11.5M15.2 4A7 7 0 0 1 15.2 14M18 1.5A10.5 10.5 0 0 1 18 16.5" stroke="#1b1b1b" stroke-width="1.4" fill="none" stroke-linecap="round"/>
</svg>
<svg style="left:1427px;top:864px" width="22" height="13" viewBox="0 0 22 13">
 <rect x="0.9" y="0.9" width="17.5" height="11" rx="2.5" stroke="#1b1b1b" stroke-width="1.4" fill="none"/>
 <rect x="3.3" y="3.3" width="12.5" height="6.2" fill="#1b1b1b"/>
 <path d="M19.2 4.5H20A0.9 0.9 0 0 1 20.9 5.4V7.4A0.9 0.9 0 0 1 20 8.3H19.2Z" fill="#1b1b1b"/>
</svg>
<div class="t" style="left:1445px;width:100px;text-align:right;top:852px;font-size:14.5px;color:#1b1b1b;letter-spacing:0.2px">13:12</div>
<div class="t" style="left:1445px;width:100.5px;text-align:right;top:872px;font-size:15px;color:#1b1b1b;letter-spacing:0.35px">05/07/2024</div>
<svg style="left:1556px;top:860px" width="18" height="20" viewBox="0 0 18 20">
 <path d="M9 1.2C5.5 1.2 3.2 4 3.2 7.2V12.5L1.2 15.5H16.8L14.8 12.5V7.2C14.8 4 12.5 1.2 9 1.2Z" stroke="#1b1b1b" stroke-width="1.4" fill="none" stroke-linejoin="round"/>
 <path d="M6.8 16A2.2 2.2 0 0 0 11.2 16" stroke="#1b1b1b" stroke-width="1.4" fill="none"/>
</svg>

</body></html>
